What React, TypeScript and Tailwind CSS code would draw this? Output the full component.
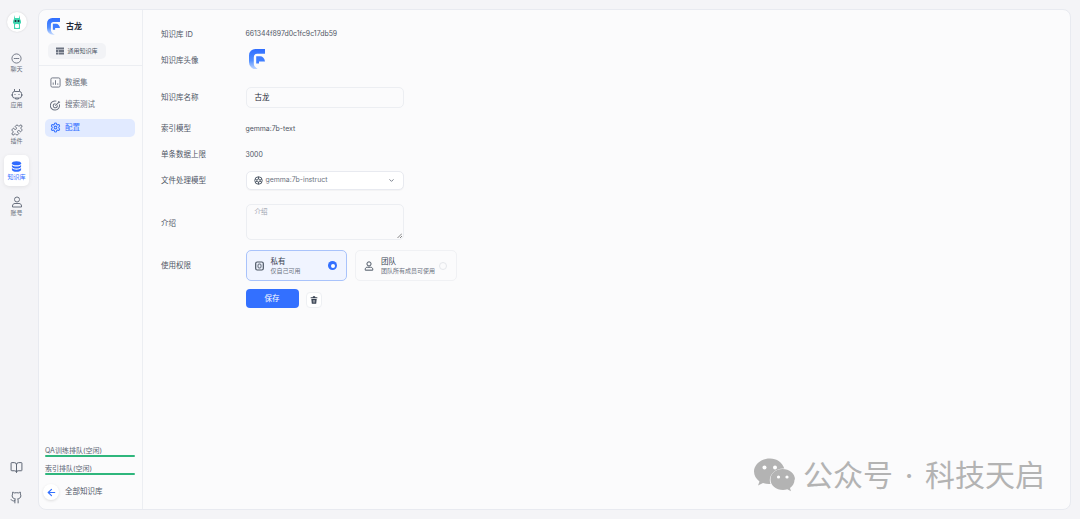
import React from "react";
import { Puzzle, Settings, BookOpen, Github, ArrowLeft, ChevronDown } from "lucide-react";

const FONT = '"Inter", "Noto Sans CJK SC", sans-serif';

function Logo({ size }: { size: number }) {
  return (
    <svg width={size} height={size * 1.28} viewBox="0 0 20 25.600">
      <defs>
        <linearGradient id={`lg${size}`} x1="0" y1="0" x2="0" y2="1">
          <stop offset="0" stopColor="#2f6dff" />
          <stop offset="0.55" stopColor="#4f8dff" />
          <stop offset="1" stopColor="#c4d9ff" />
        </linearGradient>
      </defs>
      <path d="M0 8a8 8 0 0 1 8-8h12v6H10a4 4 0 0 0-4 4v8c0 3.500 2.500 6 6 7.600H9a9 9 0 0 1-9-9z" fill={`url(#lg${size})`} />
      <path d="M9 18V9h5c3 0 5.500 2.500 6 6.500h-7.500v2.500z" fill="#3f7eff" />
    </svg>
  );
}

function NavItem({ icon, label, active }: { icon: React.ReactNode; label: string; active?: boolean }) {
  return (
    <div className={`flex h-[31px] w-[25px] flex-col items-center justify-center rounded-[5px] ${active ? "bg-white text-[#2f6bff] shadow-[0_1px_4px_rgba(0,0,0,0.08)]" : "text-[#6b7280]"}`}>
      {icon}
      <span className="mt-[1px] text-[6px] leading-[8px]">{label}</span>
    </div>
  );
}

function MenuItem({ icon, label, active }: { icon: React.ReactNode; label: string; active?: boolean }) {
  return (
    <div className={`flex h-[18px] items-center gap-[4px] rounded-[5px] pl-[5px] text-[7.500px] ${active ? "bg-[#e1eaff] text-[#3370ff]" : "text-[#6b7280]"}`}>
      {icon}
      <span>{label}</span>
    </div>
  );
}

function Row({ label, className, labelClass, children }: { label: string; className?: string; labelClass?: string; children: React.ReactNode }) {
  return (
    <div className={`flex items-center ${className ?? ""}`}>
      <div className={`w-[84.500px] shrink-0 text-[7.500px] text-[#4f5665] ${labelClass ?? ""}`}>{label}</div>
      {children}
    </div>
  );
}

function Queue({ label }: { label: string }) {
  return (
    <div className="pl-[6px] pr-[7px]">
      <div className="text-[7px] leading-[8px] text-[#5b6472]">{label}</div>
      <div className="h-[2px] rounded-full bg-[#2fb67c]" />
    </div>
  );
}

export default function App() {
  return (
    <div className="flex h-[519px] w-[1080px] overflow-hidden bg-[#f4f4f7]" style={{ fontFamily: FONT }}>
      <aside className="flex w-[38px] shrink-0 flex-col items-center pr-[5px] pt-[12px]">
        <div className="flex h-[20px] w-[20px] items-center justify-center rounded-full bg-white shadow-[0_0_2px_rgba(0,0,0,0.15)]">
          <svg width="10" height="15" viewBox="0 0 10 15">
            <path d="M2 0l1 3h4l1-3v4c1 1 1 3 1 4l-1 1v5H2V9L1 8c0-1 0-3 1-4z" fill="#3fd6b0" />
            <rect x="3" y="9" width="4" height="4" rx="1" fill="#fff" />
            <circle cx="3.500" cy="6" r="1" fill="#1f2937" />
            <circle cx="6.500" cy="6" r="1" fill="#1f2937" />
          </svg>
        </div>
        <div className="mt-[15px] flex flex-col items-center gap-[5px]">
          <NavItem label="聊天" icon={<svg width="11" height="11" viewBox="0 0 24 24" fill="none" stroke="currentColor" strokeWidth="2"><circle cx="12" cy="12" r="10" /><path d="M7 12h2.500M10.800 12h2.500M14.500 12h2.500" strokeLinecap="round" /></svg>} />
          <NavItem label="应用" icon={<svg width="12" height="12" viewBox="0 0 24 24" fill="none" stroke="currentColor" strokeWidth="2"><path d="M7 2v5M17 2v5" /><rect x="3" y="7" width="18" height="13" rx="4" /><path d="M8 12v2M16 12v2M1 13v2M23 13v2" /><path d="M9 20v2h6v-2" /></svg>} />
          <NavItem label="插件" icon={<Puzzle size={12} strokeWidth={2} />} />
          <NavItem active label="知识库" icon={<svg width="11" height="11" viewBox="0 0 24 24" fill="currentColor"><ellipse cx="12" cy="5" rx="10" ry="4.500" /><path d="M2 8.500c2 2.500 6 3.500 10 3.500s8-1 10-3.500V12c0 2.500-4.500 4.500-10 4.500S2 14.500 2 12z" /><path d="M2 15.500c2 2.500 6 3.500 10 3.500s8-1 10-3.500V19c0 2.500-4.500 4.500-10 4.500S2 21.500 2 19z" /></svg>} />
          <NavItem label="账号" icon={<svg width="12" height="12" viewBox="0 0 24 24" fill="none" stroke="currentColor" strokeWidth="2"><circle cx="12" cy="7" r="5" /><path d="M3 22v-2c0-3 2-5 5-5h8c3 0 5 2 5 5v2z" /></svg>} />
        </div>
        <div className="mt-auto flex flex-col items-center gap-[17px] pb-[15px] text-[#5b6472]">
          <BookOpen size={13} strokeWidth={1.8} />
          <Github size={13} strokeWidth={1.8} />
        </div>
      </aside>

      <main className="relative mb-[9px] mr-[9px] mt-[9px] flex flex-1 rounded-[8px] border border-[#e8eaf0] bg-[#fbfbfc]">
        <div className="flex w-[104px] shrink-0 flex-col border-r border-[#eceef2]">
          <div className="h-[56px] border-b border-[#eceef2] pl-[8px] pt-[8px]">
            <div className="flex items-center gap-[6px]">
              <Logo size={13} />
              <span className="text-[8px] font-semibold text-[#1f2937]">古龙</span>
            </div>
            <div className="ml-[1px] mt-[8px] flex h-[16px] w-[58px] items-center justify-center gap-[3px] rounded-[5px] bg-[#f2f3f6] text-[6px] text-[#4b5563]">
              <svg width="8" height="8" viewBox="0 0 8 8" fill="#6b7280"><path d="M0 .5h8v2H0zM0 3h2.500v2H0zM3 3h5v2H3zM0 5.500h2.500v2H0zM3 5.500h5v2H3z" /></svg>
              <span>通用知识库</span>
            </div>
          </div>
          <div className="flex flex-col gap-[4.500px] pl-[6px] pr-[7px] pt-[7.500px]">
            <MenuItem label="数据集" icon={<svg width="11" height="11" viewBox="0 0 24 24" fill="none" stroke="currentColor" strokeWidth="2"><rect x="2" y="2" width="20" height="20" rx="3" /><path d="M7 17v-5M12 17V7M17 17v-3" /></svg>} />
            <MenuItem label="搜索测试" icon={<svg width="11" height="11" viewBox="0 0 24 24" fill="none" stroke="currentColor" strokeWidth="2.200"><path d="M20.500 9.500A10 10 0 1 1 14 2.500" /><path d="M16 11.500a4.500 4.500 0 1 1-4-3.500" /><path d="M11.500 12.500 19 5M19 5V2M19 5h3" /></svg>} />
            <MenuItem active label="配置" icon={<Settings size={11} strokeWidth={2.2} />} />
          </div>
          <div className="mt-auto flex flex-col gap-[8px] pb-[9px]">
            <Queue label="QA训练排队(空闲)" />
            <Queue label="索引排队(空闲)" />
            <div className="flex items-center gap-[6px] pl-[4px] pt-[1px] text-[7.500px] text-[#4f5665]">
              <div className="flex h-[16px] w-[16px] items-center justify-center rounded-full bg-white shadow-[0_1px_3px_rgba(0,0,0,0.12)]">
                <ArrowLeft size={11} strokeWidth={2.5} className="text-[#3370ff]" />
              </div>
              <span>全部知识库</span>
            </div>
          </div>
        </div>

        <div className="flex-1 pl-[18px] pt-[18px]">
          <Row label="知识库 ID" className="h-[13px]">
            <span className="text-[6.900px] text-[#4f5665]">661344f897d0c1fc9c17db59</span>
          </Row>
          <Row label="知识库头像" className="mt-[8px] h-[24px]">
            <div className="mb-[4px] ml-[3px]"><Logo size={16} /></div>
          </Row>
          <Row label="知识库名称" className="mt-[14px] h-[21px]">
            <div className="flex h-[21px] w-[158px] items-center rounded-[5px] border border-[#eceef2] pl-[8px] text-[7.500px] text-[#1f2937]">古龙</div>
          </Row>
          <Row label="索引模型" className="mt-[14px] h-[14px]">
            <span className="text-[6.900px] text-[#4f5665]">gemma:7b-text</span>
          </Row>
          <Row label="单条数据上限" className="mt-[12px] h-[14px]">
            <span className="text-[6.900px] text-[#4f5665]">3000</span>
          </Row>
          <Row label="文件处理模型" className="mt-[9px] h-[19px]">
            <div className="flex h-[19px] w-[158px] items-center rounded-[5px] border border-[#e8eaf0] bg-white pl-[7px] pr-[8px] text-[6.900px] text-[#6b7280] shadow-[0_1px_1px_rgba(0,0,0,0.03)]">
              <svg width="9" height="9" viewBox="0 0 24 24" fill="none" stroke="#4b5563" strokeWidth="2.500"><circle cx="12" cy="12" r="10" /><circle cx="12" cy="12" r="4" /><path d="M12 2v6M3 8l5 3M3 17l5-3M12 22v-6M21 8l-5 3M21 17l-5-3" /></svg>
              <span className="ml-[3px]">gemma:7b-instruct</span>
              <ChevronDown size={7} strokeWidth={3} className="ml-auto" />
            </div>
          </Row>
          <Row label="介绍" labelClass="pt-[3px]" className="mt-[14px] h-[36px]">
            <div className="relative h-[36px] w-[158px] rounded-[5px] border border-[#eceef2] pl-[8px] pt-[3px] text-[6.500px] text-[#9ca3af]">
              介绍
              <svg className="absolute bottom-[1px] right-[1px]" width="5" height="5" viewBox="0 0 5 5" stroke="#555" strokeWidth="0.7"><path d="M0.500 5L5 0.500M3 5l2-2" /></svg>
            </div>
          </Row>
          <Row label="使用权限" className="mt-[10px] h-[31px]">
            <div className="flex gap-[8px]">
              <div className="flex h-[31px] w-[101.500px] items-center rounded-[5px] border border-[#a9c3fb] bg-[#f0f4ff] pl-[8px] pr-[9px]">
                <svg width="9" height="10" viewBox="0 0 9 10" fill="none" stroke="#4b5563"><rect x="0.700" y="1" width="7.600" height="8" rx="1.500" strokeWidth="1.200" /><rect x="3" y="3" width="3" height="4" rx="1" strokeWidth="0.900" /></svg>
                <div className="ml-[7px]">
                  <div className="text-[7.500px] leading-[10px] text-[#374151]">私有</div>
                  <div className="text-[6px] leading-[8px] text-[#6b7280]">仅自己可用</div>
                </div>
                <div className="ml-auto flex h-[9px] w-[9px] items-center justify-center rounded-full bg-[#3370ff]">
                  <div className="h-[4px] w-[4px] rounded-full bg-white" />
                </div>
              </div>
              <div className="flex h-[31px] w-[101.500px] items-center rounded-[5px] border border-[#f0f1f4] pl-[8px] pr-[9px]">
                <svg width="10" height="10" viewBox="0 0 24 24" fill="none" stroke="#4b5563" strokeWidth="2.400"><circle cx="12" cy="7" r="5" /><path d="M3 22v-2c0-3 2-5 5-5h8c3 0 5 2 5 5v2z" /></svg>
                <div className="ml-[7px]">
                  <div className="text-[7.500px] leading-[10px] text-[#374151]">团队</div>
                  <div className="text-[6px] leading-[8px] text-[#6b7280]">团队所有成员可使用</div>
                </div>
                <div className="ml-auto h-[8px] w-[8px] rounded-full border border-[#e5e7eb]" />
              </div>
            </div>
          </Row>
          <div className="ml-[84.500px] mt-[8px] flex items-end gap-[7.500px]">
            <div className="flex h-[19px] w-[53px] items-center justify-center rounded-[4px] bg-[#3370ff] text-[7.500px] text-white">保存</div>
            <div className="flex h-[16px] w-[16px] items-center justify-center rounded-[4px] border border-[#eef0f3] bg-white">
              <svg width="8" height="8" viewBox="0 0 24 24" fill="#374151"><path d="M9 1h6l1 3h6v3H2V4h6z" /><path d="M4 9h16l-1.500 14h-13z" /><path d="M10 12v8M14 12v8" stroke="#fff" strokeWidth="1.500" /></svg>
            </div>
          </div>
        </div>

        <div className="absolute bottom-[17px] right-[25px] flex items-center text-[#b3b3b3]">
          <svg className="mr-[8px]" width="41" height="34" viewBox="0 0 41 33" fill="#b3b3b3">
            <path d="M16 0C7 0 0 6 0 13c0 4 2 7 5.500 10l-1.500 4 5-2.500c2 .7 4 1 6 1 .5 0 1 0 1.500-.1-.5-1.200-.7-2.400-.7-3.600 0-6.500 6-11.700 13.500-11.700h1C28.500 4 22.800 0 16 0z" />
            <path d="M41 21c0-6-5.800-10.500-12.500-10.500S16.500 15 16.500 21s5.700 10.500 12.500 10.500c1.500 0 3-.3 4.300-.8l3.700 2-1-3.300c3-2 4.500-5 4.500-8.400z" />
            <circle cx="10.500" cy="9" r="2" fill="#fff" />
            <circle cx="21" cy="9" r="2" fill="#fff" />
            <circle cx="24.500" cy="18.500" r="1.600" fill="#fff" />
            <circle cx="33" cy="18.500" r="1.600" fill="#fff" />
          </svg>
          <span className="text-[30px] leading-none">公众号</span>
          <span className="w-[32px] text-center text-[30px] leading-none">·</span>
          <span className="text-[30px] leading-none">科技天启</span>
        </div>
      </main>
    </div>
  );
}
